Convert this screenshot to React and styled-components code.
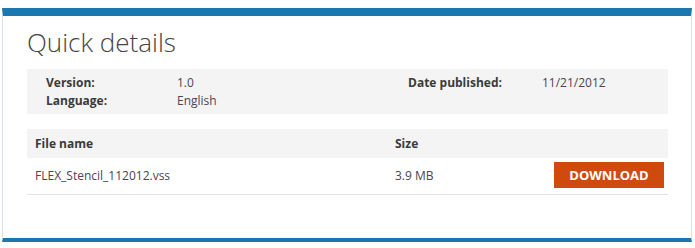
import React from 'react';
import styled, { createGlobalStyle } from 'styled-components';

const GlobalStyle = createGlobalStyle`
  html, body {
    margin: 0;
    padding: 0;
    background: #ffffff;
  }
  body {
    font-family: "Open Sans", "Liberation Sans", Arial, sans-serif;
    color: #505050;
  }
`;

const Panel = styled.section`
  margin: 8px 3px 6px 2px;
  border-top: 8px solid #1a77b0;
  border-bottom: 4px solid #1a77b0;
  border-left: 1px solid #d5e4f0;
  border-right: 1px solid #d5e4f0;
  padding: 0 23px 43px 24px;
`;

const Title = styled.h2`
  margin: 0;
  padding: 9px 0 0 0;
  height: 44px;
  font-size: 26px;
  line-height: 34px;
  font-weight: 300;
  color: #454545;
`;

const Details = styled.div`
  background: #f4f4f4;
  display: grid;
  grid-template-columns: 131px 231px 134px 1fr;
  padding: 5px 19px 4px;
  font-size: 12px;
  line-height: 18px;
`;

const Label = styled.div`
  font-weight: 700;
  color: #3a3a3a;
`;

const Value = styled.div`
  color: #4d4550;
`;

const Table = styled.table`
  width: 100%;
  margin-top: 15px;
  border-collapse: collapse;
  table-layout: fixed;
  font-size: 12px;
`;

const Th = styled.th`
  box-sizing: border-box;
  background: #f4f4f4;
  text-align: left;
  font-weight: 700;
  color: #3a3a3a;
  height: 29px;
  padding: 0 0 0 ${p => p.$pad ?? 8}px;
  ${p => p.$width && `width: ${p.$width}px;`}
`;

const Td = styled.td`
  box-sizing: border-box;
  height: 36px;
  padding: 0 ${p => (p.$right ? 4 : 0)}px 0 ${p => p.$pad ?? 8}px;
  border-bottom: 1px solid #e3e3e3;
  color: #4d4550;
  text-align: ${p => (p.$right ? 'right' : 'left')};
`;

const DownloadButton = styled.button`
  display: inline-block;
  vertical-align: middle;
  width: 110px;
  height: 26px;
  margin-bottom: 2px;
  border: none;
  background: #cf4a0f;
  color: #ffffff;
  font-family: "Open Sans", "Liberation Sans", Arial, sans-serif;
  font-size: 13px;
  font-weight: 700;
  text-transform: uppercase;
  cursor: pointer;
`;

export default function App() {
  return (
    <>
      <GlobalStyle />
      <Panel>
        <Title>Quick details</Title>
        <Details>
          <Label>Version:</Label>
          <Value>1.0</Value>
          <Label>Date published:</Label>
          <Value>11/21/2012</Value>
          <Label>Language:</Label>
          <Value>English</Value>
        </Details>
        <Table>
          <thead>
            <tr>
              <Th $width={368}>File name</Th>
              <Th $pad={0} $width={140}>Size</Th>
              <Th />
            </tr>
          </thead>
          <tbody>
            <tr>
              <Td>FLEX_Stencil_112012.vss</Td>
              <Td $pad={0}>3.9 MB</Td>
              <Td $right>
                <DownloadButton>Download</DownloadButton>
              </Td>
            </tr>
          </tbody>
        </Table>
      </Panel>
    </>
  );
}
